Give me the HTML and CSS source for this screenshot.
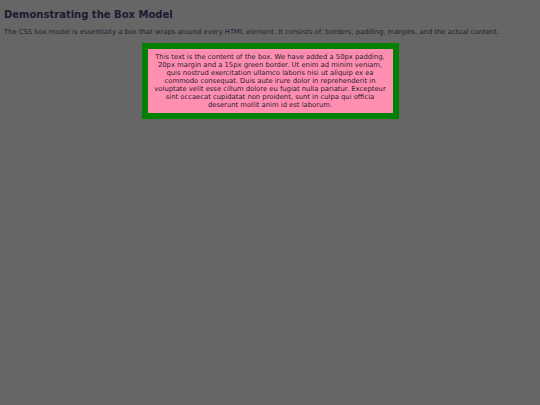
FILE: index.html
```html
<!DOCTYPE html>
<html>
<head>
<meta charset="utf-8">
<link rel="stylesheet" href="styles.css">
</head>
<body>
<h2 class="title">Demonstrating the Box Model</h2>
<p class="intro">The CSS box model is essentially a box that wraps around every HTML element. It consists of: borders, padding, margins, and the actual content.</p>
<div class="box">This text is the content of the box. We have added a 50px padding, 20px margin and a 15px green border. Ut enim ad minim veniam, quis nostrud exercitation ullamco laboris nisi ut aliquip ex ea commodo consequat. Duis aute irure dolor in reprehenderit in voluptate velit esse cillum dolore eu fugiat nulla pariatur. Excepteur sint occaecat cupidatat non proident, sunt in culpa qui officia deserunt mollit anim id est laborum.</div>
</body>
</html>
```
FILE: styles.css
```css
html, body {
  margin: 0;
  padding: 0;
  background: #666666;
}
body {
  font-family: "DejaVu Sans", Verdana, sans-serif;
  color: #1c1c33;
  padding: 9px 4px;
}
.title {
  font-size: 10px;
  font-weight: bold;
  line-height: 12px;
  margin: 0 0 7px 0;
  color: #1a1a30;
}
.intro {
  font-size: 6.8px;
  line-height: 8px;
  margin: 0 0 7px 0;
  color: #222233;
}
.box {
  width: 233px;
  margin: 0 auto;
  background: #ff8fb0;
  border: 6px solid #008000;
  padding: 4px 6px;
  font-size: 6.8px;
  line-height: 8px;
  text-align: center;
  color: #2a1a30;
}
```
